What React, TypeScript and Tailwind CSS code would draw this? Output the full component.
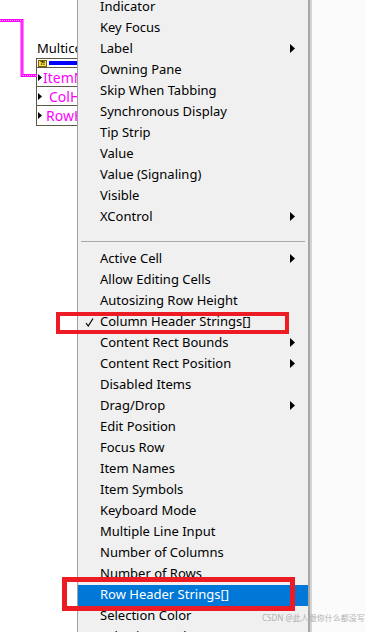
import React from 'react';

type Item = { label: string; sub?: boolean; checked?: boolean; active?: boolean; sep?: boolean };

const items: Item[] = [
  { label: 'Indicator' },
  { label: 'Key Focus' },
  { label: 'Label', sub: true },
  { label: 'Owning Pane' },
  { label: 'Skip When Tabbing' },
  { label: 'Synchronous Display' },
  { label: 'Tip Strip' },
  { label: 'Value' },
  { label: 'Value (Signaling)' },
  { label: 'Visible' },
  { label: 'XControl', sub: true },
  { label: '', sep: true },
  { label: 'Active Cell', sub: true },
  { label: 'Allow Editing Cells' },
  { label: 'Autosizing Row Height' },
  { label: 'Column Header Strings[]', checked: true },
  { label: 'Content Rect Bounds', sub: true },
  { label: 'Content Rect Position', sub: true },
  { label: 'Disabled Items' },
  { label: 'Drag/Drop', sub: true },
  { label: 'Edit Position' },
  { label: 'Focus Row' },
  { label: 'Item Names' },
  { label: 'Item Symbols' },
  { label: 'Keyboard Mode' },
  { label: 'Multiple Line Input' },
  { label: 'Number of Columns' },
  { label: 'Number of Rows' },
  { label: 'Row Header Strings[]', active: true },
  { label: 'Selection Color' },
  { label: 'Selection Mode' },
];

function Arrow({ white }: { white?: boolean }) {
  return (
    <svg width="5" height="9" viewBox="0 0 5 9" className="shrink-0">
      <path d="M0 0 L5 4.5 L0 9 Z" fill={white ? '#fff' : '#000'} />
    </svg>
  );
}

function Check() {
  return (
    <svg width="9" height="9" viewBox="0 0 9 9">
      <path d="M1 5 L3.2 8 L8 0.5" stroke="#000" strokeWidth="1.2" fill="none" />
    </svg>
  );
}

function Diagram() {
  const rows = [
    { text: 'ItemN', pl: 'pl-[1px]' },
    { text: 'ColH', pl: 'pl-[7px]' },
    { text: 'RowH', pl: 'pl-[4px]' },
  ];
  return (
    <div className="relative w-[77px] shrink-0 bg-white overflow-hidden">
      <svg width="37" height="80" className="absolute left-0 top-0">
        <path d="M0 20.5 H22 V75.5 H37" stroke="#ff00ff" strokeWidth="3" fill="none" />
        <path d="M0 20.5 H22 V75.5 H37" stroke="#ffb0ff" strokeWidth="1" strokeDasharray="1 1" fill="none" />
      </svg>
      <div className="pl-[37px] pt-[40px] text-[13px] leading-[16px] text-black whitespace-nowrap">
        Multico
      </div>
      <div className="ml-[36px] mt-[2px] border border-[#5a5a4a] border-r-0 w-[41px]">
        <div className="flex items-center h-[9px] border-b border-[#5a5a4a]">
          <div className="ml-[1px] w-[9px] h-[7px] bg-[#f5e050] border border-[#806000] text-[6px] leading-[6px] font-bold text-black flex items-center justify-center">?!</div>
          <div className="ml-[2px] flex-1 h-[4px] bg-[#0000ff]" />
        </div>
        {rows.map((r, i) => (
          <div
            key={r.text}
            className={`flex items-center h-[19px] ${i < 2 ? 'border-b border-[#5a5a4a]' : ''}`}
          >
            <svg width="4" height="7" viewBox="0 0 4 7" className="ml-[1px] shrink-0">
              <path d="M0 0 L4 3.5 L0 7 Z" fill="#000" />
            </svg>
            <span className={`${r.pl} text-[14px] text-[#ff00ff] whitespace-nowrap`}>{r.text}</span>
          </div>
        ))}
      </div>
    </div>
  );
}

export default function App() {
  return (
    <div
      className="relative w-[366px] h-[632px] overflow-hidden flex bg-white"
      style={{ fontFamily: '"Noto Sans", "Noto Sans CJK SC", sans-serif' }}
    >
      <Diagram />

      {/* menu */}
      <div className="w-[231px] shrink-0 bg-[#f0f0f0] border-l border-[#a0a0a0]">
        <div className="mt-[-3px] flex flex-col">
          {items.map((it, i) =>
            it.sep ? (
              <div key={i} className="h-[21px] flex items-end pb-[7px]">
                <div className="ml-[3px] mr-[3px] flex-1 h-px bg-[#a8a8a8]" />
              </div>
            ) : (
              <div
                key={i}
                className={`h-[21px] flex items-center pr-[13px] pb-[2px] ${it.active ? 'bg-[#0078d7] text-white' : 'text-black'}`}
              >
                <div className="w-[22px] flex justify-end pr-[6px] pt-[2px] shrink-0">{it.checked && <Check />}</div>
                <span className="flex-1 text-[13px] leading-[17px] whitespace-nowrap">{it.label}</span>
                {it.sub && <Arrow white={it.active} />}
              </div>
            )
          )}
        </div>
      </div>

      {/* menu shadow */}
      <div className="w-[2px] shrink-0 bg-[#a6a6a6]" />
      <div className="w-[2px] shrink-0 bg-[#d4d4d4]" />
      <div className="flex-1 bg-[#fbfbfb]" />

      {/* annotation boxes */}
      <div className="absolute left-[56px] top-[312px] w-[233px] h-[22px] border-4 border-[#ed1c24]" />
      <div className="absolute left-[62px] top-[577px] w-[233px] h-[34px] border-[5px] border-[#ed1c24]" />

      <div className="absolute left-[262px] top-[612px] text-[8px] text-[#b0b0b0] whitespace-nowrap">
        CSDN @此人跟你什么都没写
      </div>
    </div>
  );
}
